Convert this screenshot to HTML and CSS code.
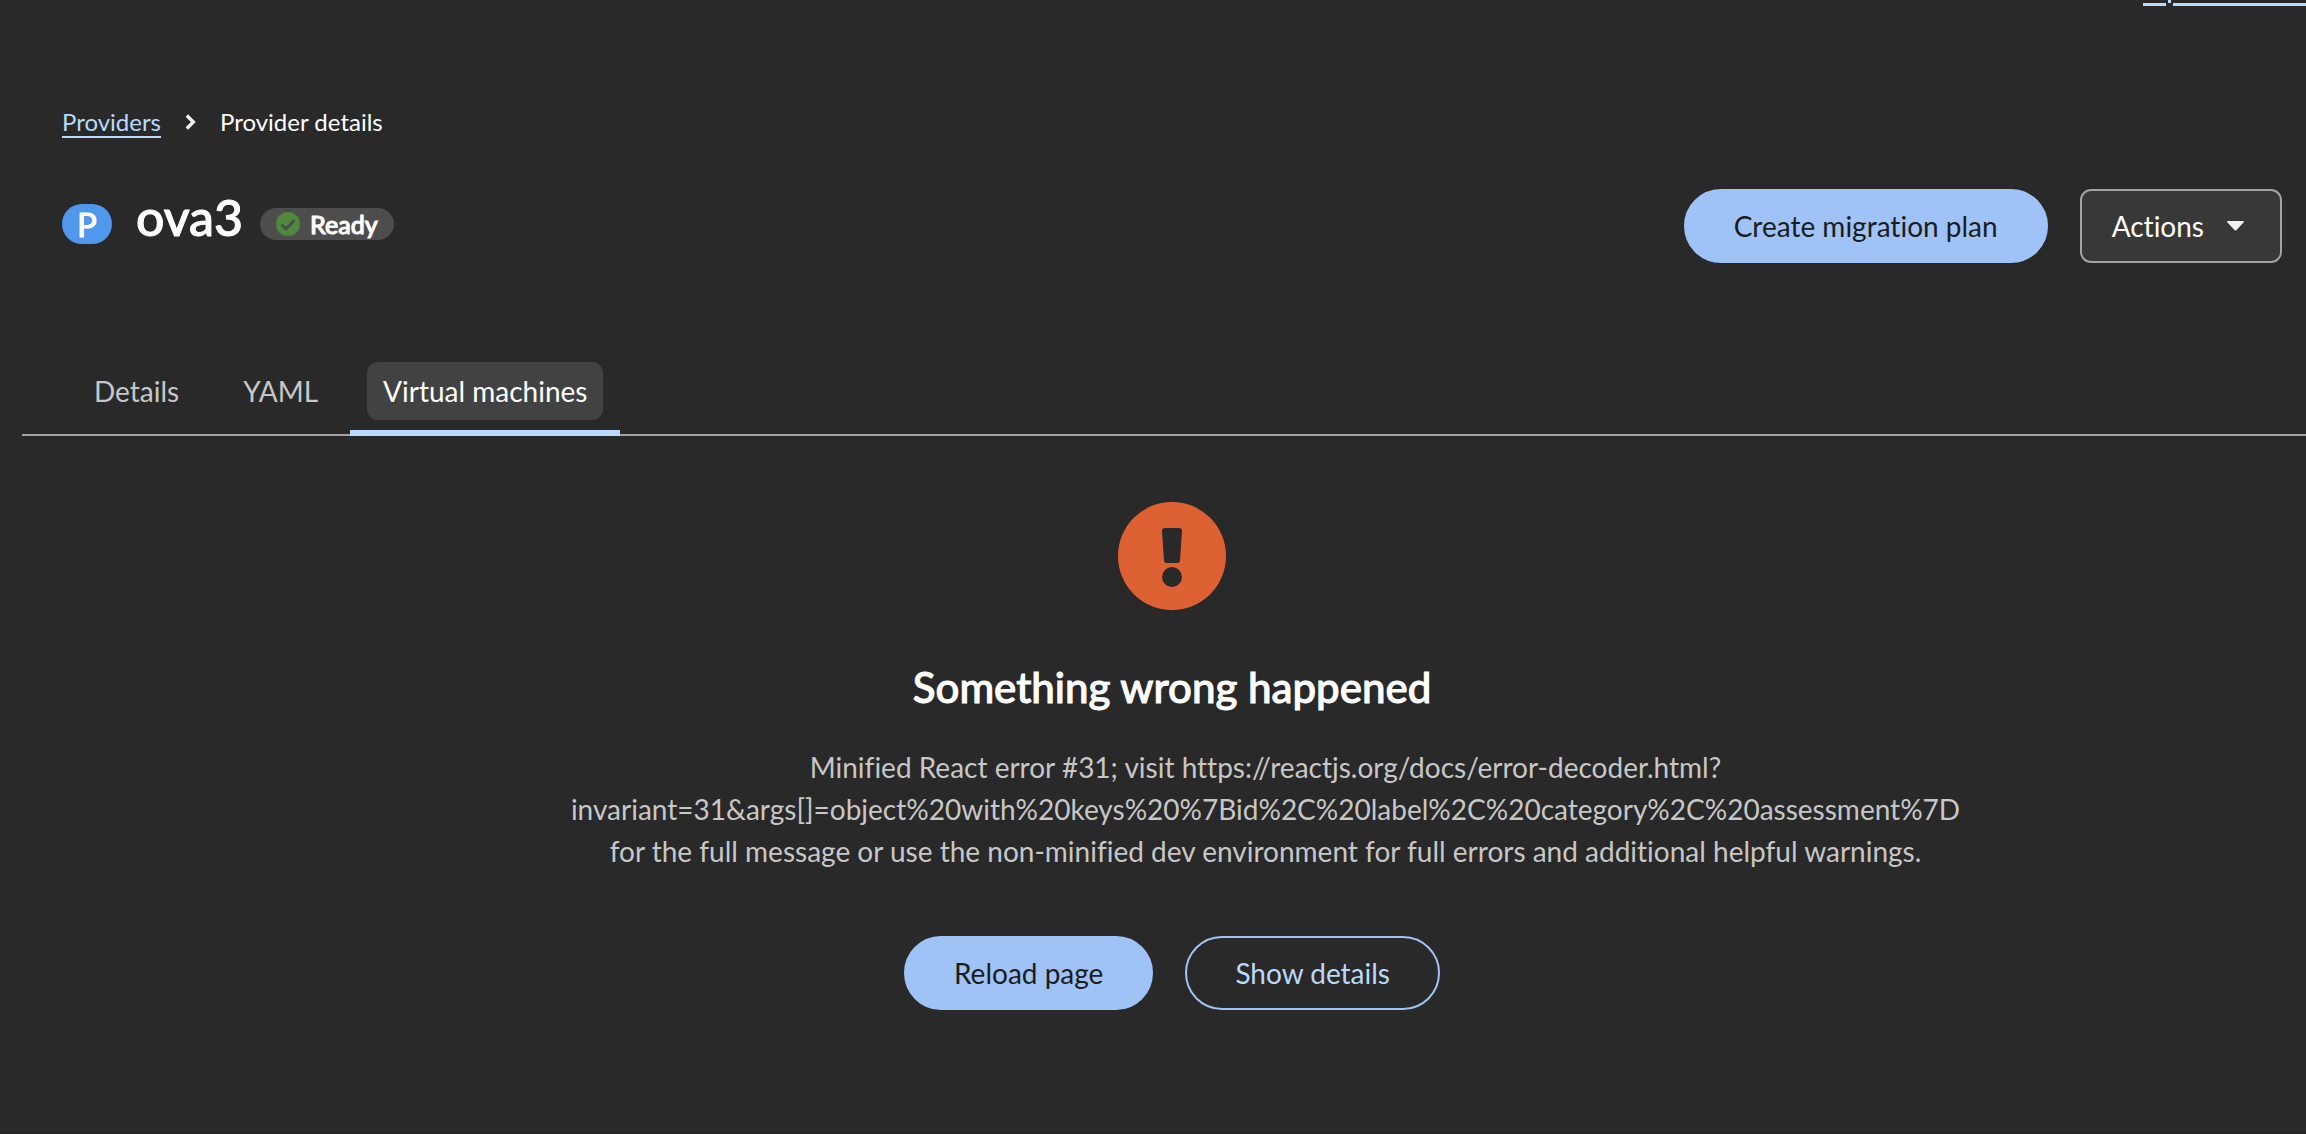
FILE: index.html
```html
<!DOCTYPE html>
<html lang="en">
<head>
    <meta charset="UTF-8">
    <meta name="viewport" content="width=device-width, initial-scale=1.0">
    <title>ova3 - Provider details</title>
    <link rel="stylesheet" href="styles.css">
</head>
<body>
    <!-- Top bar -->
    <div class="topbar">
        <svg width="163" height="6" viewBox="0 0 163 6" fill="#b9dafc" aria-hidden="true">
            <path d="M0 3h23v3H0zM25 0h3v3h-3zM30 3h133v3H30z"/>
        </svg>
    </div>

    <!-- Breadcrumb -->
    <nav class="breadcrumb" aria-label="Breadcrumb">
        <a href="#">Providers</a>
        <svg width="11" height="16" viewBox="0 0 11 16" fill="none" stroke="#f2f2f2" stroke-width="3.4" aria-hidden="true">
            <path d="M1.8 1.5 8.3 8l-6.5 6.5"/>
        </svg>
        <span>Provider details</span>
    </nav>

    <!-- Page header -->
    <header class="page-header">
        <div class="page-title">
            <span class="badge">P</span>
            <h1>ova3</h1>
            <span class="status">
                <svg width="24" height="24" viewBox="0 0 24 24" aria-hidden="true">
                    <circle cx="12" cy="12" r="12" fill="#4f8a3c"/>
                    <path d="M5.5 12.5l4.5 4.3 8.5-8.6" fill="none" stroke="#4d4d4d" stroke-width="3"/>
                </svg>
                Ready
            </span>
        </div>
        <div class="page-actions">
            <button type="button" class="btn btn-primary">Create migration plan</button>
            <button type="button" class="btn-toggle">
                Actions
                <svg width="17" height="10" viewBox="0 0 17 10" fill="#f2f2f2" aria-hidden="true">
                    <path d="M1 0h15q1.500 0 .5 1.500L9.500 9q-1 1-2 0L.5 1.500Q-.5 0 1 0z"/>
                </svg>
            </button>
        </div>
    </header>

    <!-- Tabs -->
    <div class="tabs" role="tablist">
        <button type="button" class="tab" role="tab" aria-selected="false"><span>Details</span></button>
        <button type="button" class="tab" role="tab" aria-selected="false"><span>YAML</span></button>
        <button type="button" class="tab active" role="tab" aria-selected="true"><span>Virtual machines</span></button>
    </div>

    <!-- Error state -->
    <main class="error-state">
        <svg width="108" height="108" viewBox="0 0 108 108" aria-hidden="true">
            <circle cx="54" cy="54" r="54" fill="#dd6133"/>
            <path d="M47 26h14q3 0 3 3l-2 29q0 3-3 3H49q-3 0-3-3l-2-29q0-3 3-3z" fill="#292929"/>
            <circle cx="54" cy="75" r="10" fill="#292929"/>
        </svg>
        <h2>Something wrong happened</h2>
        <p>Minified React error #31; visit https://reactjs.org/docs/error-decoder.html?<wbr>invariant=31&amp;args[]=object%20with%20keys%20%7Bid%2C%20label%2C%20category%2C%20assessment%7D for the full message or use the non-minified dev environment for full errors and additional helpful warnings.</p>
        <div class="error-actions">
            <button type="button" class="btn btn-primary">Reload page</button>
            <button type="button" class="btn btn-secondary">Show details</button>
        </div>
    </main>
</body>
</html>
```
FILE: styles.css
```css
* {
    margin: 0;
    padding: 0;
    box-sizing: border-box;
}

body {
    font-family: Lato, sans-serif;
    font-size: 28px;
    line-height: 42px;
    font-variant-ligatures: none;
    background-color: #292929;
    color: #ffffff;
    min-height: 100vh;
    border-bottom: 1px solid #231f24;
}

button {
    font: inherit;
    font-variant-ligatures: none;
    cursor: pointer;
}

/* Top bar */
.topbar {
    display: flex;
    justify-content: flex-end;
    align-items: flex-start;
    height: 104px;
}

/* Breadcrumb */
.breadcrumb {
    display: flex;
    align-items: center;
    gap: 24px;
    padding-left: 62px;
    font-size: 24px;
    line-height: 36px;
}

.breadcrumb a {
    color: #b9dafc;
    text-decoration-thickness: 2px;
    text-underline-offset: 5px;
    text-decoration-skip-ink: none;
}

/* Page header */
.page-header {
    display: flex;
    justify-content: space-between;
    align-items: flex-start;
    padding: 49px 24px 0 62px;
}

.page-title {
    display: flex;
    align-items: center;
}

.badge {
    width: 50px;
    margin-right: 24px;
    border-radius: 20px;
    background-color: #4f98ec;
    font-size: 33px;
    line-height: 40px;
    text-align: center;
    -webkit-text-stroke: 1px #ffffff;
}

.page-title h1 {
    padding-bottom: 14px;
    margin-right: 17px;
    font-size: 50px;
    font-weight: 500;
    line-height: 56px;
    -webkit-text-stroke: 1px #ffffff;
}

.status {
    display: flex;
    align-items: center;
    gap: 10px;
    padding: 0 16px;
    border-radius: 16px;
    background-color: #4d4d4d;
    font-size: 25px;
    font-weight: 500;
    line-height: 32px;
    -webkit-text-stroke: 1px #ffffff;
}

.page-actions {
    display: flex;
    gap: 32px;
}

/* Buttons */
.btn {
    padding: 14px 48px;
    border: 2px solid transparent;
    border-radius: 37px;
}

.btn-primary {
    background-color: #9fc3f6;
    border-color: #9fc3f6;
    color: #1c1c1c;
}

.btn-secondary {
    background: none;
    border-color: #9fc3f6;
    color: #b9dafc;
}

.btn-toggle {
    display: flex;
    align-items: center;
    gap: 23px;
    padding: 14px 36px 14px 30px;
    border: 2px solid #a3a3a3;
    border-radius: 11px;
    background-color: #383838;
    color: #ffffff;
}

/* Tabs */
.tabs {
    display: flex;
    margin: 99px 0 0 22px;
    padding-left: 40px;
    border-bottom: 2px solid #a3a3a3;
}

.tab {
    margin-bottom: -2px;
    padding: 0 17px 10px;
    border: none;
    border-bottom: 6px solid transparent;
    background: none;
    color: #c7c7c7;
}

.tab span {
    display: block;
    padding: 8px 15px;
    border-radius: 11px;
}

.tab.active {
    border-bottom-color: #b9dafc;
    color: #ffffff;
}

.tab.active span {
    padding: 8px 16px;
    background-color: #424242;
}

/* Error state */
.error-state {
    display: flex;
    flex-direction: column;
    align-items: center;
    padding: 66px 0 60px 38px;
    text-align: center;
}

.error-state h2 {
    margin-top: 51px;
    font-size: 42px;
    font-weight: 500;
    line-height: 52px;
    -webkit-text-stroke: 1px #ffffff;
}

.error-state p {
    max-width: 1587px;
    margin-top: 33px;
    padding-left: 187px;
    color: #c7c7c7;
}

.error-actions {
    display: flex;
    gap: 32px;
    margin-top: 64px;
}
```
